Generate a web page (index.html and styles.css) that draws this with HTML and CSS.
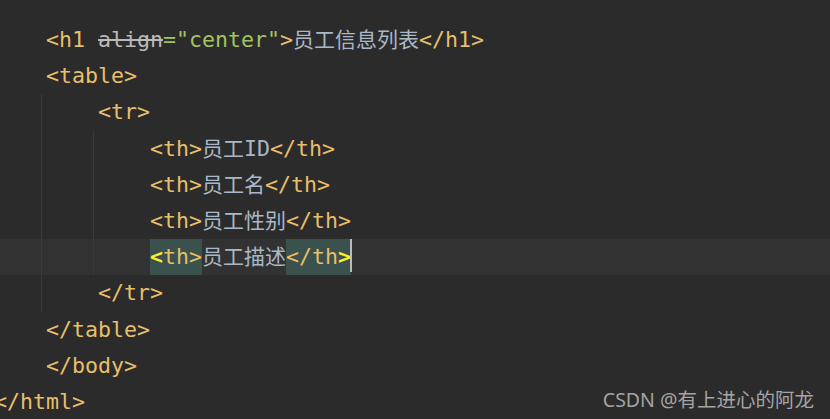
FILE: index.html
```html
<!DOCTYPE html>
<html>
<head>
<meta charset="utf-8">
<link rel="stylesheet" href="styles.css">
</head>
<body>
<div class="editor">
<div class="code">
<div class="ln"><span>    </span><span class="tag">&lt;h1 </span><span class="attr">align</span><span class="str">="center"</span><span class="tag">&gt;</span><span class="cn">员工信息列表</span><span class="tag">&lt;/h1&gt;</span></div>
<div class="ln"><span>    </span><span class="tag">&lt;table&gt;</span></div>
<div class="ln"><span class="g"></span><span>    </span><span class="tag">&lt;tr&gt;</span></div>
<div class="ln"><span class="g"></span><span class="g"></span><span>    </span><span class="tag">&lt;th&gt;</span><span class="cn">员工</span><span class="txt">ID</span><span class="tag">&lt;/th&gt;</span></div>
<div class="ln"><span class="g"></span><span class="g"></span><span>    </span><span class="tag">&lt;th&gt;</span><span class="cn">员工名</span><span class="tag">&lt;/th&gt;</span></div>
<div class="ln"><span class="g"></span><span class="g"></span><span>    </span><span class="tag">&lt;th&gt;</span><span class="cn">员工性别</span><span class="tag">&lt;/th&gt;</span></div>
<div class="ln cur"><span class="g"></span><span class="g"></span><span>    </span><span class="tag hl"><span class="br">&lt;</span>th&gt;</span><span class="cn">员工描述</span><span class="tag hl">&lt;/th<span class="br">&gt;</span></span><span class="caret"></span></div>
<div class="ln"><span class="g"></span><span>    </span><span class="tag">&lt;/tr&gt;</span></div>
<div class="ln"><span>    </span><span class="tag">&lt;/table&gt;</span></div>
<div class="ln"><span>    </span><span class="tag">&lt;/body&gt;</span></div>
<div class="ln"><span class="tag">&lt;/html&gt;</span></div>
</div>
<div class="mark">CSDN @有上进心的阿龙</div>
</div>
</body>
</html>
```

FILE: styles.css
```css
html, body {
  margin: 0;
  padding: 0;
  background: #2b2b2b;
  overflow: hidden;
}
.editor {
  position: relative;
  width: 830px;
  height: 419px;
  background: #2b2b2b;
  overflow: hidden;
}
.code {
  padding-top: 22px;
  margin-left: -6px;
  font-family: "DejaVu Sans Mono", "Noto Sans CJK SC", monospace;
  font-size: 21.6px;
  line-height: 36.2px;
  color: #a9b7c6;
}
.ln {
  height: 36.2px;
  white-space: pre;
}
.ln > span {
  vertical-align: top;
  display: inline-block;
  height: 36.2px;
}
.cur {
  background: #323232;
}
.g {
  width: 52px;
  background: linear-gradient(to right, transparent 47px, #3a3a3a 47px, #3a3a3a 48px, transparent 48px);
}
.tag {
  color: #e8bf6a;
}
.attr {
  color: #bababa;
  text-decoration: line-through;
  text-decoration-color: #bababa;
}
.str {
  color: #a5c261;
}
.txt {
  color: #a9b7c6;
}
.cn {
  font-size: 21px;
  color: #a9b7c6;
}
.hl {
  background: #3b514d;
}
.br {
  color: #ffef28;
  font-weight: bold;
}
.ln > .caret {
  width: 2px;
  height: 33px;
  background: #bbbbbb;
  margin-left: -1px;
}
.mark {
  position: absolute;
  right: 16px;
  bottom: 7px;
  font-family: "Noto Sans", "Noto Sans CJK SC", sans-serif;
  font-size: 19.5px;
  line-height: 24px;
  color: #a4a4a4;
}
```
